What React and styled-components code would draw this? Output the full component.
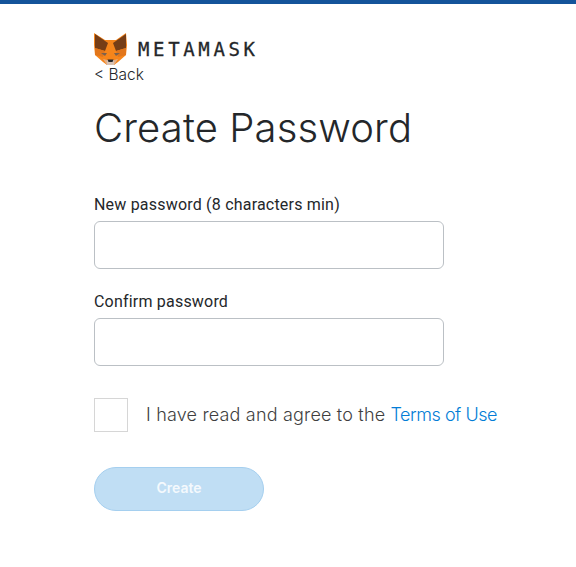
import React from 'react';
import styled, { createGlobalStyle } from 'styled-components';

const Global = createGlobalStyle`
  html, body { margin: 0; padding: 0; background: #fff; }
  body { font-family: "Inter", "Noto Sans", sans-serif; }
`;
const Page = styled.div`
  width: 576px; height: 567px; overflow: hidden; box-sizing: border-box;
  border-top: 4px solid #14549a;
  padding: 29px 0 0 94px;
`;
const Brand = styled.div`display: flex; align-items: center; height: 32px; gap: 11px;`;
const Word = styled.span`
  font-family: "DejaVu Sans Mono", monospace; font-size: 19px; font-weight: 400;
  letter-spacing: 3.65px; color: #24272a; line-height: 32px; -webkit-text-stroke: 0.3px #24272a;
`;
const Back = styled.a`
  display: block; height: 20px; line-height: 20px; font-size: 15.5px; font-weight: 300; color: #24272a;
`;
const Title = styled.h1`
  margin: 19px 0 0; font-size: 40px; line-height: 48px; font-weight: 300; color: #24272a; white-space: nowrap; letter-spacing: 0.13px;
`;
const Field = styled.div`display: flex; flex-direction: column; margin-top: ${p => p.$top}px;`;
const Label = styled.label`
  font-family: Roboto, sans-serif; font-size: 16px; line-height: 20px; color: #24272a; margin-bottom: 6px; letter-spacing: 0.2px;
`;
const Input = styled.div`
  width: 350px; height: 48px; box-sizing: border-box; border: 1px solid #bbc0c5; border-radius: 6px; background: #fff;
`;
const Terms = styled.div`display: flex; align-items: center; gap: 18px; margin-top: 32px;`;
const Box = styled.div`width: 34px; height: 34px; box-sizing: border-box; border: 1px solid #d6d6d6;`;
const TermsText = styled.span`font-size: 18px; font-weight: 300; line-height: 34px; color: #3f3f3f; white-space: nowrap; letter-spacing: 0.18px;`;
const Link = styled.span`color: #037dd6; letter-spacing: -0.47px;`;
const Button = styled.div`
  display: flex; align-items: center; justify-content: center;
  width: 170px; height: 44px; box-sizing: border-box; margin-top: 35px; padding-bottom: 3px;
  border: 1px solid #a5cfef; border-radius: 22px; background: #c0def4;
  color: #f4f9fd; font-size: 14px; font-weight: 600;
`;
const Fox = () => (
  <svg width="33" height="32" viewBox="0 0 33 32">
    <polygon points="0,0 11,7 22,7 32,0 33,12 32,22 24,29 20,32 13,32 9,29 1,22 0,12" fill="#f6851b"/>
    <polygon points="1,1 14,10 11,18 1,15" fill="#763d16"/>
    <polygon points="32,1 19,10 22,18 32,15" fill="#763d16"/>
    <polygon points="1,15 11,18 9,24 1,22" fill="#e2761b"/>
    <polygon points="32,15 22,18 24,24 32,22" fill="#e2761b"/>
    <polygon points="7,20 13,20 11,23" fill="#7a6250"/>
    <polygon points="26,20 20,20 22,23" fill="#7a6250"/>
    <polygon points="9,26 13,27 13,32" fill="#e4ad83"/>
    <polygon points="24,26 20,27 20,32" fill="#e4ad83"/>
    <polygon points="13,27 20,27 20,32 13,32" fill="#d7c1b3"/>
    <polygon points="13.5,26.5 19.5,26.5 18.5,29 14.5,29" fill="#24272a"/>
  </svg>
);
export default function App() {
  return (
    <Page>
      <Global />
      <Brand><Fox /><Word>METAMASK</Word></Brand>
      <Back>&lt; Back</Back>
      <Title>Create Password</Title>
      <Field $top={43}>
        <Label>New password (8 characters min)</Label>
        <Input />
      </Field>
      <Field $top={23}>
        <Label>Confirm password</Label>
        <Input />
      </Field>
      <Terms>
        <Box />
        <TermsText>I have read and agree to the <Link>Terms of Use</Link></TermsText>
      </Terms>
      <Button>Create</Button>
    </Page>
  );
}
